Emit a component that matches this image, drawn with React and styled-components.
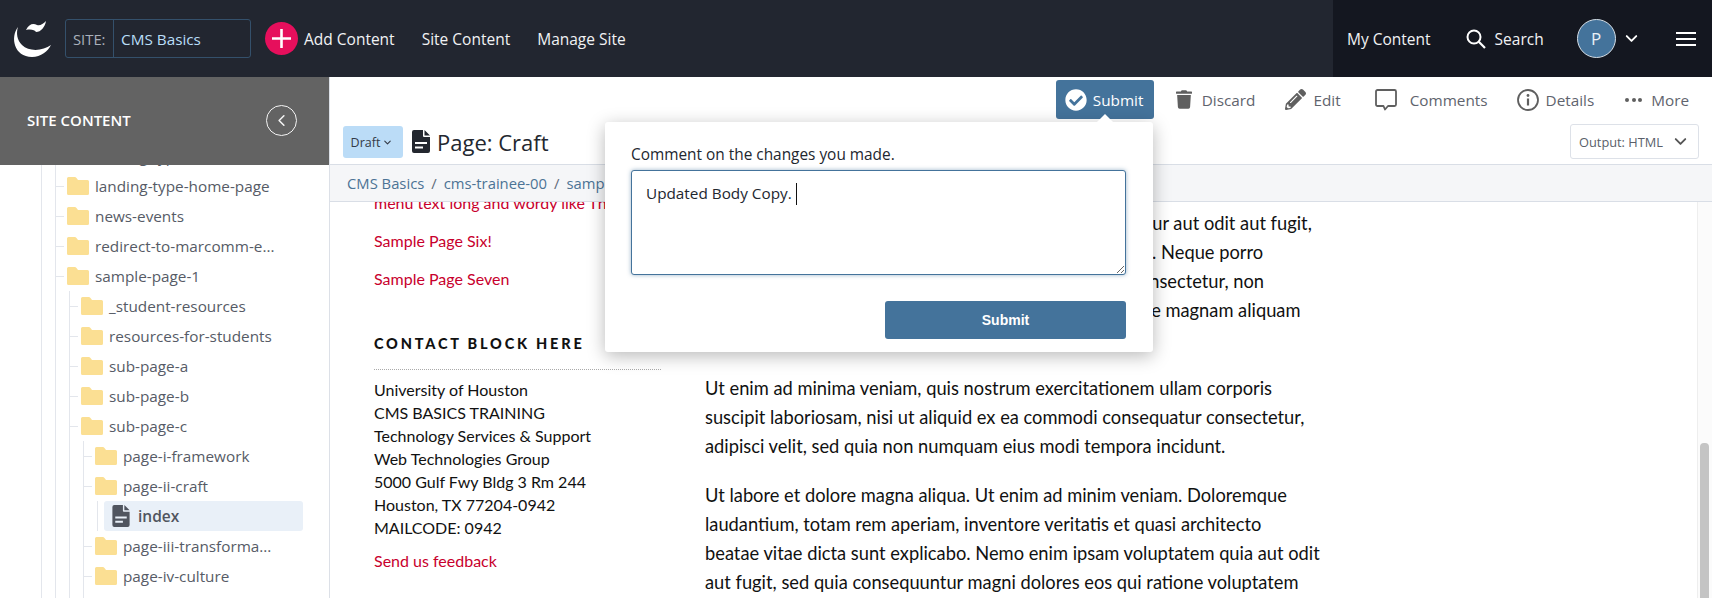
import React from 'react';
import styled, { createGlobalStyle } from 'styled-components';
import { ChevronDown, ChevronLeft } from 'lucide-react';
import { FaTrash, FaPencilAlt, FaCheckCircle } from 'react-icons/fa';

const Global = createGlobalStyle`
  html, body { margin: 0; padding: 0; height: 100%; overflow: hidden; background: #fff; }
  #root { height: 100%; }
  * { box-sizing: border-box; }
`;

const UI = `"Open Sans", "Liberation Sans", sans-serif`;
const BODY = `Lato, "Open Sans", sans-serif`;

const Page = styled.div`
  width: 1712px; height: 598px; display: flex; flex-direction: column; overflow: hidden;
  font-family: ${UI};
`;
const TopBar = styled.header`
  height: 77px; flex: none; display: flex; align-items: center; background: #222630; color: #fff;
`;
const LeftNav = styled.div`
  flex: 1; display: flex; align-items: center; padding-left: 5px;
`;
const Logo = styled.svg`
  width: 60px; height: 52px; flex: none;
`;
const SiteBox = styled.div`
  width: 186px; height: 39px; display: flex; align-items: center;
  border: 1px solid #34506b; border-radius: 3px; font-size: 15.3px;
`;
const SiteLabel = styled.span`
  width: 48px; height: 100%; display: flex; align-items: center; padding-left: 7px;
  border-right: 1px solid #34506b; color: #a9b0ba; font-size: 14.8px;
`;
const SiteName = styled.span`
  padding-left: 7px; color: #b9def8;
`;
const AddCircle = styled.span`
  width: 33px; height: 33px; margin-left: 14px; margin-right: 6px; border-radius: 50%; background: #e60f5c;
  display: flex; align-items: center; justify-content: center; flex: none;
`;
const NavLink = styled.span`
  font-size: 15.5px; color: #f1f2f4; margin-right: ${p => p.$gap || 0}px; white-space: nowrap;
`;
const RightNav = styled.div`
  width: 379px; height: 100%; background: #141720; display: flex; align-items: center; padding-left: 14px;
`;
const Avatar = styled.span`
  width: 39px; height: 39px; border-radius: 50%; border: 1px solid #d5dee6; background: #44739b;
  color: #e9f0f6; display: flex; align-items: center; justify-content: center; font-size: 17px;
  margin-right: 6px; flex: none;
`;
const MenuBars = styled.span`
  width: 20px; height: 14px; margin-left: 35px; display: flex; flex-direction: column; justify-content: space-between;
  & > i { display: block; height: 2px; background: #fff; }
`;

const Body = styled.div`
  flex: 1; min-height: 0; display: flex;
`;
const Sidebar = styled.aside`
  width: 330px; flex: none; display: flex; flex-direction: column; border-right: 1px solid #dce0e7; overflow: hidden;
`;
const SideHead = styled.div`
  height: 88px; flex: none; background: #636363; color: #fff; display: flex; align-items: center;
  justify-content: space-between; padding: 0 32px 2px 27px; font-size: 15px; font-weight: 600; position: relative; z-index: 1;
`;
const BackCircle = styled.span`
  width: 31px; height: 31px; border-radius: 50%; border: 1.5px solid #f4f4f4; display: flex; align-items: center; justify-content: center;
`;
const Tree = styled.div`
  flex: 1; min-height: 0; overflow: hidden; padding-left: 41px;
`;
const Outer = styled.div`
  border-left: 1px solid #e3e6ec; padding-left: 13px; margin-top: -24px;
`;
const Branch = styled.div`
  border-left: 1px solid #e3e6ec;
`;
const Nested = styled(Branch)`
  margin-left: 13px; padding-bottom: 30px;
`;
const Row = styled.div`
  height: 30px; display: flex; align-items: center; font-size: 15.3px; color: #565b66; white-space: nowrap;
`;
const Tick = styled.span`
  width: 8px; height: 1px; background: #e3e6ec; margin-right: 3px; flex: none;
`;
const FolderIcon = styled.svg`
  width: 22px; height: 18px; margin-right: 6px; flex: none;
`;
const IndexBranch = styled.div`
  border-left: 1px solid #e3e6ec; margin-left: 13px; padding-left: 6px;
`;
const IndexRow = styled.div`
  width: 199px; height: 30px; background: #e9f0f8; border-radius: 3px; display: flex; align-items: center;
  padding-left: 8px; font-size: 15.5px; font-weight: 600; color: #50555f;
`;
const DocSvg = styled.svg`
  width: ${p => p.$w}px; height: ${p => p.$h}px; flex: none; margin: ${p => p.$mt || 0}px ${p => p.$mr}px 0 ${p => p.$ml || 0}px;
`;

const Main = styled.main`
  flex: 1; min-width: 0; display: flex; flex-direction: column; position: relative;
`;
const Toolbar = styled.div`
  height: 47px; flex: none; display: flex; align-items: flex-start; justify-content: flex-end; padding: 3px 23px 0 0;
`;
const SubmitTab = styled.button`
  width: 98px; height: 39px; border: 0; border-radius: 3px; background: #44739b; color: #fff; font: 400 15.3px ${UI};
  display: flex; align-items: center; padding: 0 0 0 9px; gap: 6px; position: relative;
  &::after {
    content: ''; position: absolute; left: 41px; bottom: -3px; border-left: 8px solid transparent; border-right: 8px solid transparent;
    border-bottom: 8px solid #fff; z-index: 3;
  }
`;
const ToolItem = styled.span`
  height: 39px; display: flex; align-items: center; font-size: 15.3px; color: #5f646e; margin-left: ${p => p.$ml}px;
  gap: ${p => p.$gap}px; white-space: nowrap;
`;
const Dots = styled.span`
  display: flex; gap: 2.5px; margin-right: 3px;
  & > i { width: 4px; height: 4px; border-radius: 50%; background: #5f5f5f; display: block; }
`;
const TitleRow = styled.div`
  height: 41px; flex: none; display: flex; align-items: flex-start; padding: 0 13px; border-bottom: 1px solid #d9dee6;
`;
const Draft = styled.span`
  width: 60px; height: 32px; margin-top: 2px; background: #bbdcf7; border-radius: 3px; color: #333a46; padding-right: 2px;
  display: flex; align-items: center; justify-content: center; gap: 2px; font-size: 12.5px; margin-right: 8px; flex: none;
`;
const Title = styled.h1`
  margin: 2px 0 0; flex: 1; height: 32px; display: flex; align-items: center; font-size: 22px; font-weight: 400; color: #23272f;
`;
const Output = styled.span`
  width: 129px; height: 35px; border: 1px solid #dde1e8; border-radius: 3px; display: flex; align-items: center;
  justify-content: center; gap: 8px; font-size: 12.8px; color: #5a5f6a;
`;
const Crumbs = styled.nav`
  height: 37px; flex: none; display: flex; align-items: center; padding-left: 17px; gap: 7px; background: #f5f6f8;
  border-bottom: 1px solid #d9dee6; font-size: 14.8px; color: #4c7395; position: relative; z-index: 1;
`;
const Sep = styled.span`
  color: #5f6b78;
`;
const Content = styled.div`
  flex: 1; min-height: 0; display: flex; overflow: hidden; font-family: ${BODY}; color: #111;
`;
const Aside = styled.div`
  width: 287px; margin-left: 44px; flex: none; margin-top: -9px; font-size: 16px;
`;
const RedLink = styled.div`
  color: #c8002d; line-height: 20px; margin-bottom: ${p => p.$mb || 0}px; white-space: nowrap;
`;
const BlockTitle = styled.h3`
  margin: 45px 0 0; font-size: 14.5px; font-weight: 900; letter-spacing: 2.8px; line-height: 20px; color: #111; white-space: nowrap;
`;
const Dotted = styled.div`
  border-top: 1px dotted #aaa; margin-top: 15px; margin-bottom: 8px;
`;
const Address = styled.div`
  line-height: 23px; margin-bottom: 12px; white-space: nowrap;
`;
const Article = styled.article`
  width: 640px; margin-left: 44px; flex: none; font-size: 18.3px; line-height: 29px; padding-top: 7px;
`;
const Para = styled.p`
  margin: 0 0 20px; white-space: nowrap;
`;
const ScrollTrack = styled.div`
  width: 15px; margin-left: auto; flex: none; background: #fbfbfb; border-left: 1px solid #eee; padding: 241px 3px 0 2px;
`;
const Thumb = styled.div`
  height: 200px; background: #c4c4c4; border-radius: 4px;
`;

const Popover = styled.div`
  position: absolute; left: 275px; top: 45px; width: 548px; height: 230px; background: #fff; border-radius: 3px; z-index: 2;
  box-shadow: 0 4px 18px rgba(0,0,0,.28); padding: 23px 27px 0 26px; display: flex; flex-direction: column;
`;
const PopLabel = styled.label`
  font-size: 15.4px; line-height: 20px; color: #23272f; margin-bottom: 5px;
`;
const AreaWrap = styled.div`
  position: relative; height: 105px; flex: none;
`;
const Area = styled.textarea`
  width: 100%; height: 100%; border: 1px solid #44739b; border-radius: 3px; padding: 12px 14px; font: 400 15.3px/20px ${UI};
  color: #23272f; outline: none; resize: vertical; box-shadow: 0 0 4px rgba(68,115,155,.55);
`;
const Caret = styled.span`
  position: absolute; left: 165px; top: 13px; width: 1px; height: 22px; background: #111;
`;
const PopSubmit = styled.button`
  align-self: flex-end; width: 241px; height: 38px; margin-top: 26px; border: 0; border-radius: 3px; background: #44739b; color: #fff;
  font: 700 14px "Liberation Sans", Arial, sans-serif;
`;

const Folder = () => (
  <FolderIcon viewBox="0 0 22 18">
    <path d="M1.500 0h6.200c.8 0 1.300.3 1.800.9L11 3h9.500A1.500 1.500 0 0 1 22 4.500v12a1.500 1.500 0 0 1-1.500 1.500h-19A1.500 1.500 0 0 1 0 16.500v-15A1.500 1.500 0 0 1 1.500 0z" fill="#fbdf93" />
  </FolderIcon>
);

const Doc = ({ w, h, mr, mt, ml, color }) => (
  <DocSvg $w={w} $h={h} $mr={mr} $mt={mt} $ml={ml} viewBox="0 0 18 23">
    <path fillRule="evenodd" d="M2 0h9v6a1 1 0 0 0 1 1h6v14a2 2 0 0 1-2 2H2a2 2 0 0 1-2-2V2a2 2 0 0 1 2-2zM12.500 0 18 5.500H12.500zM3 12v2h12v-2zM3 16.500v2h8v-2z" fill={color} />
  </DocSvg>
);

const FolderRow = ({ name }) => (
  <Row><Tick /><Folder />{name}</Row>
);

export default function App() {
  return (
    <Page>
      <Global />
      <TopBar>
        <LeftNav>
          <Logo viewBox="0 0 60 52">
            <path d="M13 14C5 24 9 44 27 44c9 0 16-6 19-12-8 6-22 7-29 0-5-5-6-12-4-18z" fill="#fff" />
            <path d="M21 17c3-6 7-7 11-5 3 1 6-1 9-4-1 6-5 11-10 11-1-2-5-3-10-2z" fill="#fff" />
          </Logo>
          <SiteBox>
            <SiteLabel>SITE:</SiteLabel>
            <SiteName>CMS Basics</SiteName>
          </SiteBox>
          <AddCircle>
            <svg width="21" height="21" viewBox="0 0 21 21"><path d="M10.500 1v19M1 10.500h19" stroke="#fff" strokeWidth="2.600" /></svg>
          </AddCircle>
          <NavLink $gap={27}>Add Content</NavLink>
          <NavLink $gap={27}>Site Content</NavLink>
          <NavLink>Manage Site</NavLink>
        </LeftNav>
        <RightNav>
          <NavLink $gap={35}>My Content</NavLink>
          <svg width="20" height="20" viewBox="0 0 20 20" style={{ marginRight: 9 }}>
            <circle cx="8" cy="8" r="6.500" fill="none" stroke="#fff" strokeWidth="2" />
            <path d="M12.800 12.800 19 19" stroke="#fff" strokeWidth="2.200" />
          </svg>
          <NavLink $gap={33}>Search</NavLink>
          <Avatar>P</Avatar>
          <ChevronDown size={19} color="#fff" strokeWidth={2.4} />
          <MenuBars><i /><i /><i /></MenuBars>
        </RightNav>
      </TopBar>
      <Body>
        <Sidebar>
          <SideHead>
            SITE CONTENT
            <BackCircle><ChevronLeft size={19} color="#f4f4f4" strokeWidth={2} /></BackCircle>
          </SideHead>
          <Tree>
            <Outer>
              <Branch>
                <FolderRow name="landing-type-" />
                <FolderRow name="landing-type-home-page" />
                <FolderRow name="news-events" />
                <FolderRow name="redirect-to-marcomm-e..." />
                <FolderRow name="sample-page-1" />
                <Nested>
                  <FolderRow name="_student-resources" />
                  <FolderRow name="resources-for-students" />
                  <FolderRow name="sub-page-a" />
                  <FolderRow name="sub-page-b" />
                  <FolderRow name="sub-page-c" />
                  <Nested>
                    <FolderRow name="page-i-framework" />
                    <FolderRow name="page-ii-craft" />
                    <IndexBranch>
                      <IndexRow><Doc w={18} h={22} mr={8} color="#50555f" />index</IndexRow>
                    </IndexBranch>
                    <FolderRow name="page-iii-transforma..." />
                    <FolderRow name="page-iv-culture" />
                  </Nested>
                </Nested>
              </Branch>
            </Outer>
          </Tree>
        </Sidebar>
        <Main>
          <Toolbar>
            <SubmitTab><FaCheckCircle size={22} color="#fff" />Submit</SubmitTab>
            <ToolItem $ml={22} $gap={10}><FaTrash size={16} color="#5f5f5f" style={{ height: 21 }} />Discard</ToolItem>
            <ToolItem $ml={30} $gap={7}><FaPencilAlt size={21} color="#5f5f5f" />Edit</ToolItem>
            <ToolItem $ml={34} $gap={13}>
              <svg width="22" height="22" viewBox="0 0 22 22">
                <path d="M2.500 1h17A1.500 1.500 0 0 1 21 2.500v13a1.500 1.500 0 0 1-1.500 1.500H13l-3 3.500-1.500-3.500h-6A1.500 1.500 0 0 1 1 15.500v-13A1.500 1.500 0 0 1 2.500 1z" fill="none" stroke="#5f5f5f" strokeWidth="1.800" strokeLinejoin="round" />
              </svg>
              Comments
            </ToolItem>
            <ToolItem $ml={29} $gap={7}>
              <svg width="22" height="22" viewBox="0 0 22 22">
                <circle cx="11" cy="11" r="10" fill="none" stroke="#5f5f5f" strokeWidth="1.800" />
                <circle cx="11" cy="6.500" r="1.400" fill="#5f5f5f" />
                <path d="M11 9.500v7" stroke="#5f5f5f" strokeWidth="2.200" />
              </svg>
              Details
            </ToolItem>
            <ToolItem $ml={31} $gap={6}><Dots><i /><i /><i /></Dots>More</ToolItem>
          </Toolbar>
          <TitleRow>
            <Draft>Draft<ChevronDown size={11} strokeWidth={2.4} /></Draft>
            <Doc w={18} h={23} mr={7} mt={6} ml={1} color="#23272f" />
            <Title>Page: Craft</Title>
            <Output>Output: HTML<ChevronDown size={19} color="#555" strokeWidth={2.4} /></Output>
          </TitleRow>
          <Crumbs>
            <span>CMS Basics</span><Sep>/</Sep><span>cms-trainee-00</span><Sep>/</Sep><span>sample-page-1</span>
          </Crumbs>
          <Content>
            <Aside>
              <RedLink $mb={18}>menu text long and wordy like This One Here</RedLink>
              <RedLink $mb={18}>Sample Page Six!</RedLink>
              <RedLink>Sample Page Seven</RedLink>
              <BlockTitle>CONTACT BLOCK HERE</BlockTitle>
              <Dotted />
              <Address>
                University of Houston<br />
                CMS BASICS TRAINING<br />
                Technology Services &amp; Support<br />
                Web Technologies Group<br />
                5000 Gulf Fwy Bldg 3 Rm 244<br />
                Houston, TX 77204-0942<br />
                MAILCODE: 0942
              </Address>
              <RedLink>Send us feedback</RedLink>
            </Aside>
            <Article>
              <Para>
                Nemo enim ipsam voluptatem quia voluptas sit aspernatur aut odit aut fugit,<br />
                sed quia et magni dolores eos qui ratione sequi nesciunt. Neque porro<br />
                quisquam est, qui dolorem ipsum quia dolor sit amet, consectetur, non<br />
                numquam eius modi tempora incidunt ut labore et dolore magnam aliquam<br />
                quaerat voluptatem.
              </Para>
              <Para>
                Ut enim ad minima veniam, quis nostrum exercitationem ullam corporis<br />
                suscipit laboriosam, nisi ut aliquid ex ea commodi consequatur consectetur,<br />
                adipisci velit, sed quia non numquam eius modi tempora incidunt.
              </Para>
              <Para>
                Ut labore et dolore magna aliqua. Ut enim ad minim veniam. Doloremque<br />
                laudantium, totam rem aperiam, inventore veritatis et quasi architecto<br />
                beatae vitae dicta sunt explicabo. Nemo enim ipsam voluptatem quia aut odit<br />
                aut fugit, sed quia consequuntur magni dolores eos qui ratione voluptatem
              </Para>
            </Article>
            <ScrollTrack><Thumb /></ScrollTrack>
          </Content>
          <Popover>
            <PopLabel>Comment on the changes you made.</PopLabel>
            <AreaWrap>
              <Area readOnly defaultValue="Updated Body Copy." />
              <Caret />
            </AreaWrap>
            <PopSubmit>Submit</PopSubmit>
          </Popover>
        </Main>
      </Body>
    </Page>
  );
}
